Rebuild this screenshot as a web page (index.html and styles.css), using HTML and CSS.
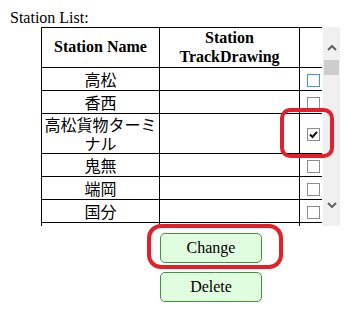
FILE: index.html
```html
<!DOCTYPE html>
<html lang="ja">
<head>
    <meta charset="UTF-8">
    <title>Station List</title>
    <link rel="stylesheet" href="styles.css">
</head>
<body>
    <div class="caption">Station List:</div>

    <div class="list-wrap">
        <div class="list-box">
            <table class="station-table">
                <colgroup>
                    <col class="col-name">
                    <col class="col-drawing">
                    <col class="col-check">
                </colgroup>
                <tr>
                    <th>Station Name</th>
                    <th>Station TrackDrawing</th>
                    <th></th>
                </tr>
                <tr><td>高松</td><td></td><td><span class="check focus"></span></td></tr>
                <tr><td>香西</td><td></td><td><span class="check"></span></td></tr>
                <tr><td>高松貨物ターミナル</td><td></td><td><span class="check"><svg viewBox="0 0 11 11" width="11" height="11"><path d="M2 5.5 L4.5 8 L9 2.8" fill="none" stroke="#111" stroke-width="2"/></svg></span></td></tr>
                <tr><td>鬼無</td><td></td><td><span class="check"></span></td></tr>
                <tr><td>端岡</td><td></td><td><span class="check"></span></td></tr>
                <tr><td>国分</td><td></td><td><span class="check"></span></td></tr>
                <tr><td>讃岐府中</td><td></td><td><span class="check"></span></td></tr>
            </table>
        </div>
        <!-- scrollbar drawn by hand so it looks like the old browser one -->
        <div class="scrollbar">
            <svg class="arrow" viewBox="0 0 10 6" width="10" height="6"><path d="M1 5 L5 1 L9 5" fill="none" stroke="#606060" stroke-width="2"/></svg>
            <div class="thumb"></div>
            <div class="track"></div>
            <svg class="arrow" viewBox="0 0 10 6" width="10" height="6"><path d="M1 1 L5 5 L9 1" fill="none" stroke="#606060" stroke-width="2"/></svg>
        </div>
    </div>

    <div class="actions">
        <button class="btn">Change</button>
        <button class="btn">Delete</button>
    </div>

    <!-- red marks over the screenshot -->
    <div class="mark mark-check"></div>
    <div class="mark mark-change"></div>
</body>
</html>
```

FILE: styles.css
```css
body {
    margin: 8px;
    font-family: "Liberation Serif", serif;
    font-size: 16px;
    color: #000;
    background-color: #fff;
}
.caption {
    padding-left: 2px;
    line-height: 19px;
}
.list-wrap {
    display: flex;
    margin-left: 33px;
    height: 199px;
}
.list-box {
    overflow: hidden;
    height: 199px;
}
.station-table {
    border-collapse: collapse;
    table-layout: fixed;
    width: 282px;
}
.col-name { width: 118px; }
.col-drawing { width: 140px; }
.col-check { width: 24px; }
.station-table th,
.station-table td {
    border: 1px solid #000;
    padding: 1px;
    text-align: center;
    vertical-align: middle;
}
.station-table th {
    font-family: "Liberation Serif", serif;
    font-weight: bold;
    line-height: 18.5px;
    height: 37px;
}
.station-table td {
    font-family: "Noto Sans CJK JP", sans-serif;
    line-height: 18.5px;
    height: 20px;
}
.check {
    display: inline-flex;
    align-items: center;
    justify-content: center;
    width: 11px;
    height: 11px;
    border: 1px solid #8c8c8c;
    background: #fff;
    vertical-align: middle;
    margin-left: 4px;
    margin-top: -2px;
}
.check.focus {
    border-color: #3e9cc4;
}
.scrollbar {
    display: flex;
    flex-direction: column;
    align-items: center;
    width: 17px;
    margin-left: 1px;
    background-color: #f0f0f0;
}
.scrollbar .arrow {
    margin-top: 18px;
}
.scrollbar .thumb {
    width: 15px;
    height: 15px;
    margin-top: 9px;
    background-color: #cdcdcd;
}
.scrollbar .track {
    flex: 1;
}
.scrollbar .arrow:last-child {
    margin-top: 0;
    margin-bottom: 18px;
}
.actions {
    display: flex;
    flex-direction: column;
    gap: 9px;
    margin-left: 152px;
    margin-top: 7px;
}
.btn {
    width: 102px;
    height: 30px;
    font-family: "Liberation Serif", serif;
    font-size: 16px;
    color: #000;
    background-color: #e0fde0;
    border: 1px solid #3d963d;
    border-radius: 5px;
}
.mark {
    position: absolute;
    border: 4px solid #e3202a;
}
.mark-check {
    left: 280px;
    top: 108px;
    width: 46px;
    height: 42px;
    border-radius: 10px;
}
.mark-change {
    left: 147px;
    top: 224px;
    width: 128px;
    height: 37px;
    border-radius: 14px;
}
```
